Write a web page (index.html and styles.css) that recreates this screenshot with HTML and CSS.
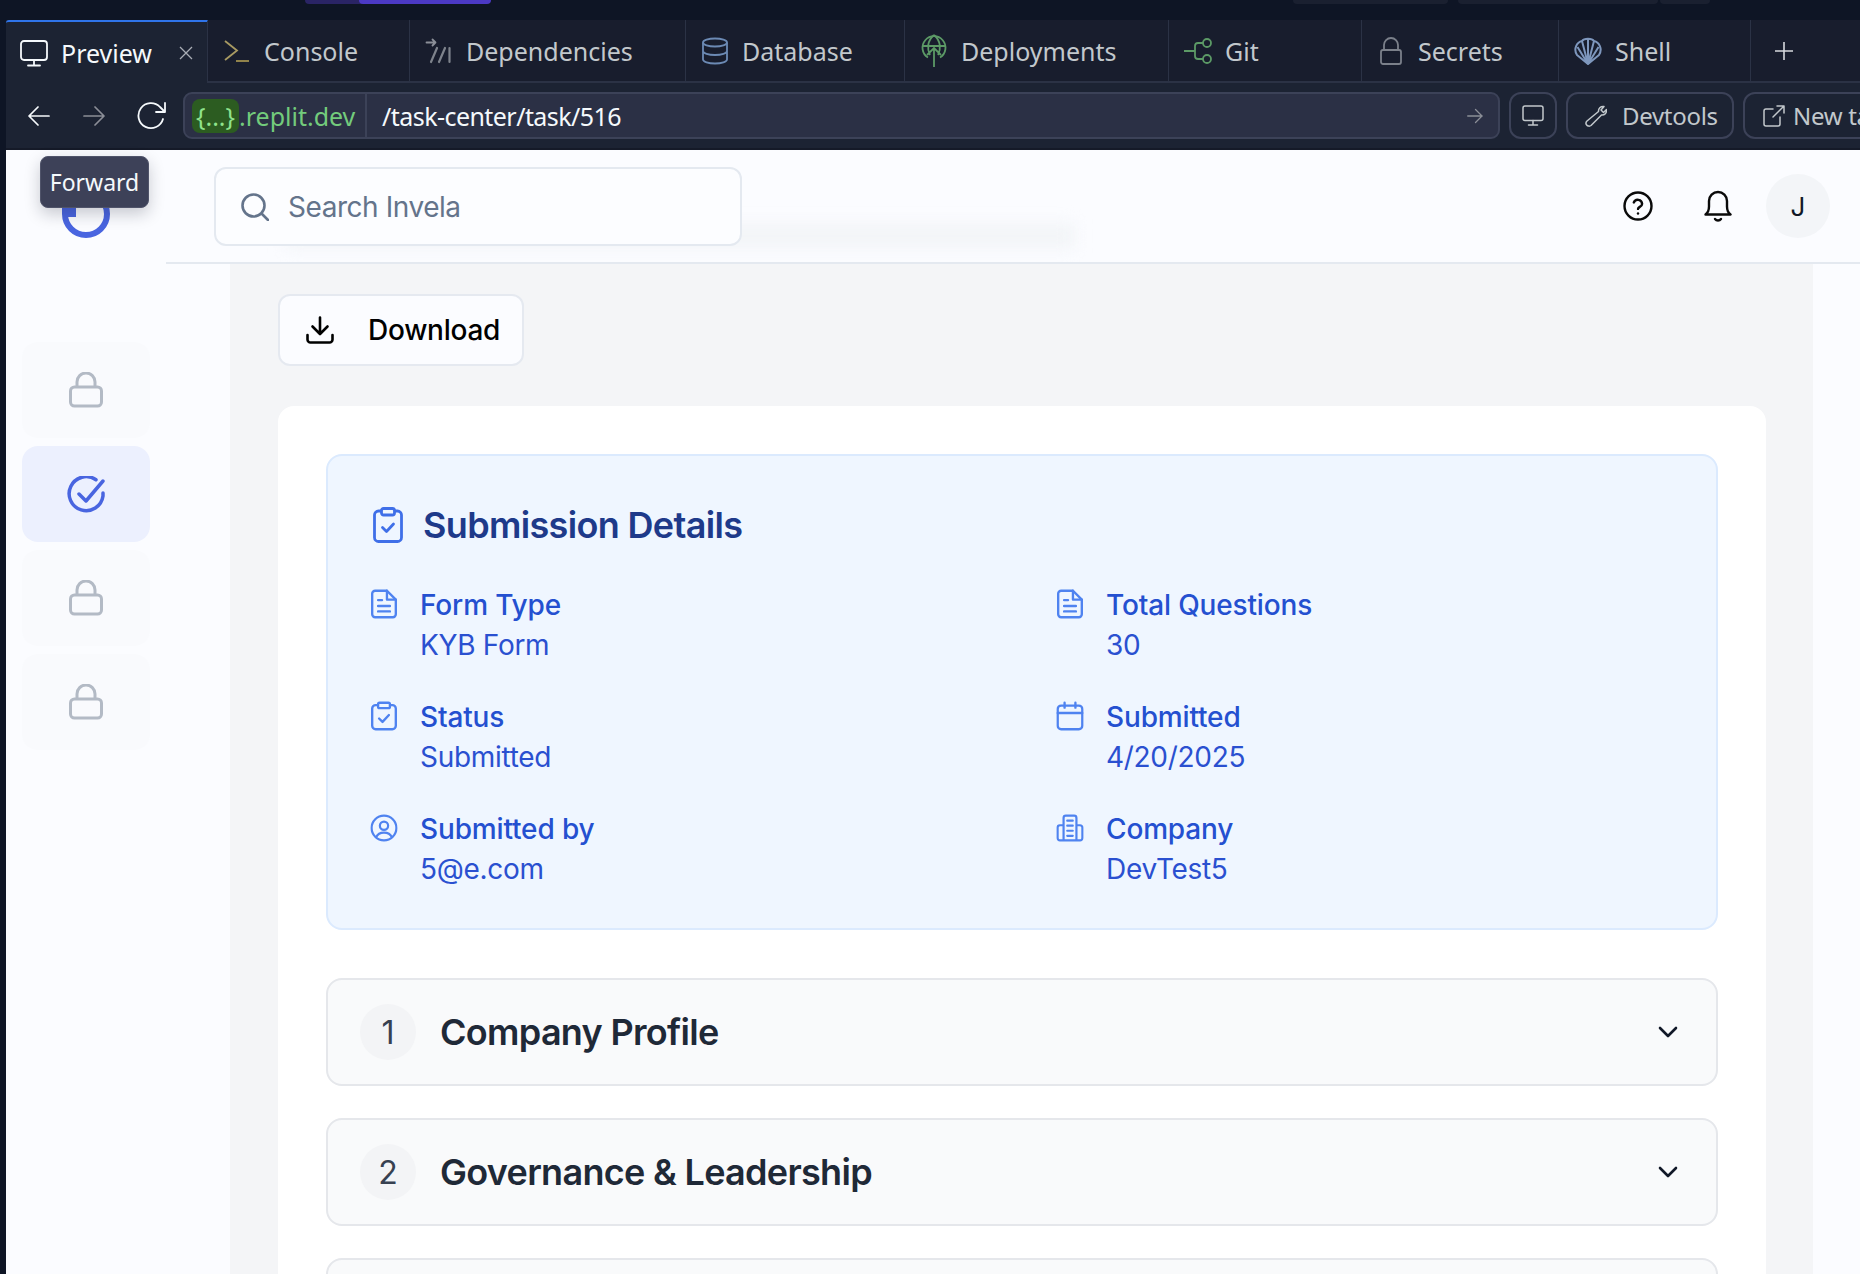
FILE: index.html
```html
<!DOCTYPE html>
<html lang="en">
<head>
<meta charset="utf-8">
<title>Invela task</title>
<link rel="stylesheet" href="styles.css">
</head>
<body>
<div class="top-strip">
  <span class="pill pill-dim"></span><span class="pill pill-purple"></span>
  <span class="pill pill-slate pill-a"></span><span class="pill pill-slate pill-b"></span><span class="pill pill-slate pill-c"></span>
</div>
<div class="window">
  <nav class="tabs">
    <div class="tab tab-active">
      <svg class="ti" viewBox="0 0 28 28" fill="none" stroke="#f5f9fc" stroke-width="1.8" stroke-linecap="round" stroke-linejoin="round"><rect x="1" y="2" width="26" height="19" rx="3"/><path d="M14 21v5M8 26.5h12"/></svg>
      <span>Preview</span>
      <svg class="close" viewBox="0 0 14 14" fill="none" stroke="#a9adb5" stroke-width="1.3"><path d="M1 1l12 12M13 1L1 13"/></svg>
    </div>
    <div class="tab">
      <svg class="ti" viewBox="0 0 28 28" fill="none" stroke="#a89a62" stroke-width="1.8"><path d="M2 4l12 9.5L2 23"/><path d="M13 24h13" stroke="#a08f50"/></svg>
      <span>Console</span>
    </div>
    <div class="tab">
      <svg class="ti" viewBox="0 0 28 28" fill="none" stroke="#8b8f98" stroke-width="1.8" stroke-linecap="round" stroke-linejoin="round"><path d="M1.500 5.500h9M7.500 2.500l3 3-3 3"/><path d="M6 25l6-14M14 25l6-14M24.500 25V11" stroke="#7e838c" stroke-width="2.200"/></svg>
      <span>Dependencies</span>
    </div>
    <div class="tab">
      <svg class="ti" viewBox="0 0 28 28" fill="none" stroke="#6c8ab4" stroke-width="1.8"><ellipse cx="14" cy="5.500" rx="12" ry="4"/><path d="M2 5.500v17c0 2.200 5.400 4 12 4s12-1.800 12-4v-17M2 14c0 2.200 5.400 4 12 4s12-1.800 12-4"/></svg>
      <span>Database</span>
    </div>
    <div class="tab">
      <svg class="ti ti-tall" viewBox="0 0 28 34" fill="none" stroke="#5c9a66" stroke-width="1.8"><path d="M8 23.500a11.500 11.500 0 1 1 12 0"/><path d="M3 12h22M14 1c-7 6-7 14-4 20M14 1c7 6 7 14 4 20M14 33V15M7 21l7-7 7 7"/></svg>
      <span>Deployments</span>
    </div>
    <div class="tab">
      <svg class="ti" viewBox="0 0 28 28" fill="none" stroke="#5c9a66" stroke-width="1.8"><circle cx="23" cy="6" r="4"/><circle cx="23" cy="22" r="4"/><path d="M0 14h11M19 6h-5a3 3 0 0 0-3 3v10a3 3 0 0 0 3 3h5"/></svg>
      <span>Git</span>
    </div>
    <div class="tab">
      <svg class="ti" viewBox="0 0 28 28" fill="none" stroke="#7b808a" stroke-width="1.8"><rect x="4" y="13" width="20" height="14" rx="2"/><path d="M7 13V8a7 7 0 0 1 14 0v5"/></svg>
      <span>Secrets</span>
    </div>
    <div class="tab">
      <svg class="ti" viewBox="0 0 28 28" fill="none" stroke="#7e97bd" stroke-width="2" stroke-linejoin="round"><path d="M14 27L3 18C-1 12 3 5 8 4c2-3 10-3 12 0 5 1 9 8 5 14z"/><path d="M14 27L8 4M14 27L20 4M14 27L3.500 10M14 27l10.500-17M14 27V2"/></svg>
      <span>Shell</span>
    </div>
    <div class="tab tab-add">
      <svg class="plus" viewBox="0 0 18 18" fill="none" stroke="#d6d9dd" stroke-width="1.6"><path d="M9 0v18M0 9h18"/></svg>
    </div>
  </nav>

  <div class="toolbar">
    <svg class="nav-i" viewBox="0 0 22 22" fill="none" stroke="#f5f9fc" stroke-width="1.700" stroke-linecap="round" stroke-linejoin="round"><path d="M21 11H1.500M10 2l-9 9 9 9"/></svg>
    <svg class="nav-i nav-fwd" viewBox="0 0 22 22" fill="none" stroke="#8b8e97" stroke-width="1.700" stroke-linecap="round" stroke-linejoin="round"><path d="M1 11h19.500M12 2l9 9-9 9"/></svg>
    <svg class="nav-i nav-reload" viewBox="0 0 30 28" fill="none" stroke="#f5f9fc" stroke-width="1.800" stroke-linecap="round" stroke-linejoin="round"><path d="M26 17a12.500 12.500 0 1 1-3-12l5 5M28 1v9h-9"/></svg>
    <div class="address">
      <div class="domain"><span class="chip">{...}</span><span>.replit.dev</span></div>
      <div class="path">/task-center/task/516</div>
      <svg class="go" viewBox="0 0 16 16" fill="none" stroke="#8b8e97" stroke-width="1.300" stroke-linecap="round" stroke-linejoin="round"><path d="M0.700 8h14.500M8.500 1.500L15 8l-6.500 6.500"/></svg>
    </div>
    <button class="tool tool-icon"><svg class="tool-svg" viewBox="0 0 22 22" fill="none" stroke="#c2c8cc" stroke-width="1.500" stroke-linecap="round"><rect x="1" y="1" width="20" height="14.500" rx="2"/><path d="M11 15.500v4M6.500 20h9"/></svg></button>
    <button class="tool tool-dev"><svg class="tool-svg" viewBox="0 0 22 22" fill="none" stroke="#c2c8cc" stroke-width="1.500" stroke-linejoin="round"><path d="M13.500 6.500c-.3-3 2-5.500 5.500-5l-3 3.500 2.500 2.500 3-3c.5 3.500-2 5.800-5 5.500L6 20.500c-1.500 1.200-3.500.6-4.300-.5-.8-1-.9-2.800.3-4z"/></svg><span>Devtools</span></button>
    <button class="tool tool-new"><svg class="tool-svg" viewBox="0 0 22 22" fill="none" stroke="#c2c8cc" stroke-width="1.500" stroke-linecap="round" stroke-linejoin="round"><path d="M10 4H3a2 2 0 0 0-2 2v13a2 2 0 0 0 2 2h12a2 2 0 0 0 2-2v-7M21 1L10 12M14 1h7v7"/></svg><span>New tab</span></button>
  </div>

  <div class="app">
    <aside class="sidebar">
      <div class="tooltip">Forward</div>
      <div class="logo-row">
        <svg class="logo" viewBox="0 0 48 60" fill="none"><path d="M3 26v8a21 21 0 1 0 21-21" stroke="#4965e0" stroke-width="6"/><rect x="6" y="28" width="8" height="9" fill="#4965e0"/></svg>
      </div>
      <div class="side-item"><svg class="lock" viewBox="0 0 34 36" fill="none" stroke="#b3bac5" stroke-width="3"><rect x="1.500" y="15" width="31" height="19" rx="4"/><path d="M8 15V10a9 9 0 0 1 18 0v5"/></svg></div>
      <div class="side-item side-active"><svg class="check" viewBox="0 0 38 40" fill="none" stroke="#4965e0" stroke-width="3.500" stroke-linecap="round" stroke-linejoin="round"><path d="M29 3.800A17 17 0 1 0 36 20v-3"/><path d="M12 18l7 7L36 5"/></svg></div>
      <div class="side-item"><svg class="lock" viewBox="0 0 34 36" fill="none" stroke="#b3bac5" stroke-width="3"><rect x="1.500" y="15" width="31" height="19" rx="4"/><path d="M8 15V10a9 9 0 0 1 18 0v5"/></svg></div>
      <div class="side-item"><svg class="lock" viewBox="0 0 34 36" fill="none" stroke="#b3bac5" stroke-width="3"><rect x="1.500" y="15" width="31" height="19" rx="4"/><path d="M8 15V10a9 9 0 0 1 18 0v5"/></svg></div>
    </aside>

    <div class="page">
      <header class="header">
        <div class="ghost"></div>
        <div class="search">
          <svg class="search-i" viewBox="0 0 28 28" fill="none" stroke="#64748b" stroke-width="2.600" stroke-linecap="round"><circle cx="12.500" cy="12.500" r="11"/><path d="M21 21l6 6"/></svg>
          <span>Search Invela</span>
        </div>
        <div class="head-actions">
          <svg class="help" viewBox="0 0 30 30" fill="none" stroke="#0a0a0a" stroke-width="2.400" stroke-linecap="round" stroke-linejoin="round"><circle cx="15" cy="15" r="13.500"/><path d="M10.800 11.500a4.300 4.300 0 0 1 8.300 1.400c0 2.800-4.100 3-4.100 5"/><path d="M15 22.500v.1"/></svg>
          <svg class="bell" viewBox="0 0 28 32" fill="none" stroke="#0a0a0a" stroke-width="2.400" stroke-linecap="round" stroke-linejoin="round"><path d="M1.500 24.500c2-1.500 3.500-3 3.500-8V11a9 9 0 0 1 18 0v5.500c0 5 1.500 6.500 3.500 8z"/><path d="M11 29c1.500 2 4.500 2 6 0"/></svg>
          <div class="avatar">J</div>
        </div>
      </header>

      <div class="body-row">
        <main class="main">
          <button class="download">
            <svg class="dl-i" viewBox="0 0 28 28" fill="none" stroke="#000" stroke-width="2.600" stroke-linecap="round" stroke-linejoin="round"><path d="M14 1.500v16M6.500 10.500l7.500 7.500 7.500-7.500M1.500 19v4.500a3 3 0 0 0 3 3h19a3 3 0 0 0 3-3V19"/></svg>
            <span>Download</span>
          </button>
          <section class="card">
            <div class="panel">
              <h2 class="panel-title">
                <svg class="title-i" viewBox="0 0 30 36" fill="none" stroke="#3f6fe8" stroke-width="2.800" stroke-linecap="round" stroke-linejoin="round"><rect x="1.500" y="4" width="27" height="30.500" rx="4"/><rect x="8.500" y="1.500" width="13" height="6.500" rx="2" fill="#eff6ff"/><path d="M9.500 20.500l4 4 7-7.500"/></svg>
                <span>Submission Details</span>
              </h2>
              <div class="facts">
                <div class="fact">
                  <svg class="fact-i" viewBox="0 0 28 30" fill="none" stroke="#4f83f0" stroke-width="2.400" stroke-linejoin="round" stroke-linecap="round"><path d="M17 1.500H5a3 3 0 0 0-3 3v21a3 3 0 0 0 3 3h18a3 3 0 0 0 3-3v-15z"/><path d="M17 1.500v9h9M8 11h4M8 17h12M8 22.500h12"/></svg>
                  <div><div class="fact-k">Form Type</div><div class="fact-v">KYB Form</div></div>
                </div>
                <div class="fact">
                  <svg class="fact-i" viewBox="0 0 28 30" fill="none" stroke="#4f83f0" stroke-width="2.400" stroke-linejoin="round" stroke-linecap="round"><path d="M17 1.500H5a3 3 0 0 0-3 3v21a3 3 0 0 0 3 3h18a3 3 0 0 0 3-3v-15z"/><path d="M17 1.500v9h9M8 11h4M8 17h12M8 22.500h12"/></svg>
                  <div><div class="fact-k">Total Questions</div><div class="fact-v">30</div></div>
                </div>
                <div class="fact">
                  <svg class="fact-i" viewBox="0 0 28 30" fill="none" stroke="#4f83f0" stroke-width="2.400" stroke-linejoin="round" stroke-linecap="round"><rect x="2" y="4" width="24" height="24.500" rx="3.500"/><rect x="8" y="1.500" width="12" height="5.500" rx="1.500" fill="#eff6ff"/><path d="M9 17.500l3.500 3.500 6.500-7"/></svg>
                  <div><div class="fact-k">Status</div><div class="fact-v">Submitted</div></div>
                </div>
                <div class="fact">
                  <svg class="fact-i" viewBox="0 0 28 30" fill="none" stroke="#4f83f0" stroke-width="2.400" stroke-linecap="round"><rect x="1.500" y="4.500" width="25" height="24" rx="3.500"/><path d="M1.500 12h25M8.500 1.500v5M19.500 1.500v5"/></svg>
                  <div><div class="fact-k">Submitted</div><div class="fact-v">4/20/2025</div></div>
                </div>
                <div class="fact">
                  <svg class="fact-i" viewBox="0 0 30 30" fill="none" stroke="#4f83f0" stroke-width="2.400" stroke-linecap="round"><circle cx="15" cy="15" r="13.500"/><circle cx="15" cy="12.500" r="4.500"/><path d="M6.500 25c1.500-3.500 4.500-5 8.500-5s7 1.500 8.500 5"/></svg>
                  <div><div class="fact-k">Submitted by</div><div class="fact-v">5@e.com</div></div>
                </div>
                <div class="fact">
                  <svg class="fact-i" viewBox="0 0 30 30" fill="none" stroke="#4f83f0" stroke-width="2.400" stroke-linecap="round" stroke-linejoin="round"><path d="M8 28.500V4a2.500 2.500 0 0 1 2.500-2.500h9A2.500 2.500 0 0 1 22 4v24.500zM8 12H4a2.500 2.500 0 0 0-2.500 2.500V26A2.500 2.500 0 0 0 4 28.500h22a2.500 2.500 0 0 0 2.500-2.500V14.500A2.500 2.500 0 0 0 26 12h-4"/><path d="M12 7h6M12 12.500h6M12 18h6M12 23.500h6"/></svg>
                  <div><div class="fact-k">Company</div><div class="fact-v">DevTest5</div></div>
                </div>
              </div>
            </div>
            <div class="acc">
              <span class="acc-num">1</span><span class="acc-title">Company Profile</span>
              <svg class="chev" viewBox="0 0 20 12" fill="none" stroke="#111827" stroke-width="2.600" stroke-linecap="round" stroke-linejoin="round"><path d="M2 2l8 8 8-8"/></svg>
            </div>
            <div class="acc">
              <span class="acc-num">2</span><span class="acc-title">Governance &amp; Leadership</span>
              <svg class="chev" viewBox="0 0 20 12" fill="none" stroke="#111827" stroke-width="2.600" stroke-linecap="round" stroke-linejoin="round"><path d="M2 2l8 8 8-8"/></svg>
            </div>
            <div class="acc"></div>
          </section>
        </main>
      </div>
    </div>
  </div>
</div>
</body>
</html>
```
FILE: styles.css
```css
* { box-sizing: border-box; }
html, body { margin: 0; height: 1274px; overflow: hidden; }
body { background: #0e1525; font-family: Inter, "Liberation Sans", sans-serif; }
svg { display: block; flex: none; }
button { font: inherit; padding: 0; cursor: default; }

.top-strip { height: 20px; display: flex; align-items: flex-start; }
.pill { display: block; height: 4px; border-radius: 0 0 6px 6px; }
.pill-dim { width: 60px; margin-left: 305px; background: #2a2465; }
.pill-purple { width: 132px; margin-left: -6px; background: #4b39c4; }
.pill-slate { background: #1a2030; }
.pill-a { width: 155px; margin-left: 802px; }
.pill-b { width: 200px; margin-left: 10px; }
.pill-c { width: 50px; margin-left: 2px; }

.window { margin-left: 6px; }
.tabs {
  height: 63px;
  display: grid;
  grid-template-columns: 202px 202px 276px 219px 264px 193px 197px 192px 1fr;
  background: #181d2d;
  color: #c2c8cc;
  font-family: "Noto Sans", sans-serif;
  font-size: 25px;
}
.tab {
  display: flex;
  align-items: center;
  gap: 13px;
  padding: 0 14px 0 15px;
  border-right: 1px solid #2b3245;
  border-bottom: 2px solid #2b3245;
  white-space: nowrap;
}
.tab-active {
  background: #1c2333;
  color: #f5f9fc;
  border-top: 2px solid #2f74ea;
  border-bottom: 0;
  border-radius: 3px 0 0 0;
  padding-left: 14px;
}
.tab-add { border-right: 0; padding-left: 24px; }
.ti { width: 28px; height: 28px; }
.ti-tall { height: 34px; }
.close { width: 14px; height: 14px; margin-left: auto; }
.plus { width: 18px; height: 18px; }

.toolbar {
  height: 67px;
  display: flex;
  align-items: center;
  padding: 0 0 0 22px;
  background: #1c2333;
  border-bottom: 2px solid #151a28;
  color: #c2c8cc;
  font-family: "Noto Sans", sans-serif;
  font-size: 25px;
  overflow: hidden;
}
.nav-i { width: 22px; height: 22px; }
.nav-fwd { margin-left: 33px; }
.nav-reload { width: 30px; height: 28px; margin-left: 32px; }
.address {
  width: 1317px;
  height: 47px;
  flex: none;
  margin-left: 16px;
  display: flex;
  align-items: center;
  background: #2b3045;
  border: 2px solid #3c4258;
  border-radius: 9px;
  color: #f5f9fc;
}
.domain {
  width: 182px;
  height: 100%;
  display: flex;
  align-items: center;
  padding-left: 7px;
  border-right: 2px solid #3c4258;
  color: #73cb7c;
}
.chip {
  width: 47px;
  height: 34px;
  display: flex;
  align-items: center;
  justify-content: center;
  background: #2c5c21;
  color: #8fe38c;
  border-radius: 8px;
}
.path { margin-left: 15px; letter-spacing: -.55px; }
.go { width: 16px; height: 16px; margin-left: auto; margin-right: 15px; }
.tool {
  height: 47px;
  display: flex;
  align-items: center;
  flex: none;
  background: transparent;
  border: 2px solid #3c4258;
  border-radius: 12px;
  color: #c2c8cc;
  font-size: 24px;
  letter-spacing: -.3px;
  margin-left: 9px;
}
.tool-svg { width: 22px; height: 22px; }
.tool-icon { width: 48px; justify-content: center; }
.tool-dev { width: 168px; padding-left: 17px; gap: 15px; }
.tool-new { width: 160px; padding-left: 18px; gap: 8px; }

.app { height: 1124px; display: flex; }
.sidebar {
  position: relative;
  width: 160px;
  flex: none;
  padding: 0 16px;
  background: #fbfcff;
  display: flex;
  flex-direction: column;
  gap: 8px;
}
.logo-row { height: 184px; display: flex; justify-content: center; padding-top: 30px; }
.logo { width: 48px; height: 60px; }
.side-item {
  height: 96px;
  width: 128px;
  display: flex;
  align-items: center;
  justify-content: center;
  background: #f9fafd;
  border-radius: 16px;
}
.side-active { background: #ecf0fe; }
.lock { width: 34px; height: 36px; }
.check { width: 38px; height: 40px; margin-top: 3px; }
.tooltip {
  position: absolute;
  left: 34px;
  top: 6px;
  width: 109px;
  height: 52px;
  display: flex;
  align-items: center;
  justify-content: center;
  background: #3d4158;
  border: 1px solid #50546a;
  border-radius: 8px;
  color: #f5f9fc;
  font-family: "Noto Sans", sans-serif;
  font-size: 23px;
  box-shadow: 0 6px 16px rgba(20, 25, 40, .22);
  z-index: 3;
}

.page { flex: 1; min-width: 0; display: flex; flex-direction: column; }
.header {
  position: relative;
  height: 114px;
  flex: none;
  display: flex;
  align-items: flex-start;
  justify-content: space-between;
  padding: 17px 30px 0 48px;
  background: #fbfcff;
  border-bottom: 2px solid #e4e9f0;
  overflow: hidden;
}
.ghost {
  position: absolute;
  left: 119px;
  top: 74px;
  width: 790px;
  height: 24px;
  background: #f2f4f7;
  filter: blur(8px);
}
.search {
  position: relative;
  width: 528px;
  height: 79px;
  display: flex;
  align-items: center;
  gap: 19px;
  padding-left: 25px;
  background: #fcfdff;
  border: 2px solid #e4e9f0;
  border-radius: 12px;
  color: #64748b;
  font-size: 28px;
  letter-spacing: -.45px;
}
.search-i { width: 28px; height: 28px; }
.head-actions { display: flex; align-items: center; position: relative; margin-top: 7px; }
.help { width: 30px; height: 30px; }
.bell { width: 28px; height: 32px; margin-left: 51px; }
.avatar {
  width: 64px;
  height: 64px;
  margin-left: 34px;
  display: flex;
  align-items: center;
  justify-content: center;
  background: #f3f5f8;
  border-radius: 50%;
  color: #111827;
  font-size: 26px;
}

.body-row { flex: 1; display: flex; padding: 0 47px 0 64px; background: #fbfcff; min-height: 0; }
.main { flex: 1; padding: 30px 47px 0 48px; background: #f4f5f7; overflow: hidden; }
.download {
  width: 246px;
  height: 72px;
  display: flex;
  align-items: center;
  gap: 34px;
  padding-left: 26px;
  background: #fbfcff;
  border: 2px solid #e5e9f0;
  border-radius: 12px;
  color: #000;
  font-size: 28px;
  font-weight: 500;
  letter-spacing: -.25px;
}
.dl-i { width: 28px; height: 28px; }

.card {
  margin-top: 40px;
  padding: 48px;
  background: #fff;
  border-radius: 16px 16px 0 0;
}
.panel {
  height: 476px;
  padding: 49px 43px 0 43px;
  background: #eff6ff;
  border: 2px solid #dbeafe;
  border-radius: 16px;
}
.panel-title {
  margin: 0 0 0 2px;
  display: flex;
  align-items: center;
  gap: 20px;
  color: #1e3a8a;
  font-size: 36px;
  font-weight: 600;
  line-height: 40px;
  letter-spacing: -.66px;
}
.title-i { width: 30px; height: 36px; }
.facts {
  margin-top: 40px;
  display: grid;
  grid-template-columns: 686px 1fr;
  row-gap: 32px;
}
.fact { display: flex; gap: 23px; }
.fact-i { width: 26px; height: 30px; margin-top: 4px; transform: scale(1.06); }
.fact-k { color: #2450d0; font-size: 28px; font-weight: 500; line-height: 40px; letter-spacing: -.15px; }
.fact-v { color: #2a50d0; font-size: 28px; line-height: 40px; letter-spacing: -.3px; }

.acc {
  height: 108px;
  margin-top: 32px;
  display: flex;
  align-items: center;
  padding: 0 38px 0 32px;
  background: #f9fafb;
  border: 2px solid #e5e7eb;
  border-radius: 16px;
}
.panel + .acc { margin-top: 48px; }
.acc-num {
  width: 56px;
  height: 56px;
  display: flex;
  align-items: center;
  justify-content: center;
  background: #f3f4f6;
  border-radius: 50%;
  color: #374151;
  font-size: 32px;
}
.acc-title { margin-left: 24px; color: #1f2937; font-size: 36px; font-weight: 600; letter-spacing: -.7px; }
.chev { width: 20px; height: 12px; margin-left: auto; }
```
